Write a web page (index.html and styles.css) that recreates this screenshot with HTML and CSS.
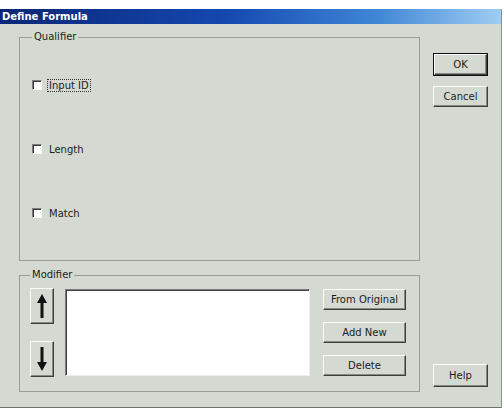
FILE: index.html
```html
<!DOCTYPE html>
<html lang="en">
<head>
    <meta charset="UTF-8">
    <title>Define Formula</title>
    <link rel="stylesheet" href="styles.css">
</head>
<body>

    <div class="window">
        <div class="titlebar">Define Formula</div>

        <div class="client">
            <div class="main">
                <fieldset class="group qualifier">
                    <legend>Qualifier</legend>
                    <label class="check">
                        <span class="box"></span><span class="caption focused">Input ID</span>
                    </label>
                    <label class="check">
                        <span class="box"></span><span class="caption">Length</span>
                    </label>
                    <label class="check">
                        <span class="box"></span><span class="caption">Match</span>
                    </label>
                </fieldset>

                <fieldset class="group modifier">
                    <legend>Modifier</legend>
                    <div class="arrows">
                        <button class="btn arrow">
                            <svg width="10" height="24" viewBox="0 0 10 24">
                                <path d="M5 0 L10 9 H6.5 V24 H3.5 V9 H0 Z" fill="#111"/>
                            </svg>
                        </button>
                        <button class="btn arrow">
                            <svg width="10" height="24" viewBox="0 0 10 24">
                                <path d="M5 24 L10 15 H6.5 V0 H3.5 V15 H0 Z" fill="#111"/>
                            </svg>
                        </button>
                    </div>
                    <div class="listbox"></div>
                    <div class="actions">
                        <button class="btn">From Original</button>
                        <button class="btn">Add New</button>
                        <button class="btn">Delete</button>
                    </div>
                </fieldset>
            </div>

            <div class="side">
                <button class="btn default">OK</button>
                <button class="btn">Cancel</button>
                <button class="btn help">Help</button>
            </div>
        </div>
    </div>

</body>
</html>
```

FILE: styles.css
```css
body {
    margin: 0;
    background: #fff;
    font-family: "DejaVu Sans", Tahoma, sans-serif;
    font-size: 10px;
    color: #1c1c1c;
}
.window {
    margin-top: 9px;
    width: 501px;
    height: 398px;
    background: #d4dad1;
    border-right: 1px solid #8a8f88;
    border-bottom: 1px solid #6e736c;
    display: flex;
    flex-direction: column;
}
.titlebar {
    height: 15px;
    line-height: 15px;
    padding-left: 2px;
    color: #fff;
    font-weight: bold;
    font-size: 10px;
    background: linear-gradient(to right, #0b2677, #1448b0 45%, #3f86d6 75%, #9fcdf2);
}
.client {
    flex: 1;
    display: flex;
    padding: 7px 0 14px 19px;
}
.main {
    display: flex;
    flex-direction: column;
    width: 401px;
}
.group {
    margin: 0;
    padding: 0;
    border: 1px solid #979c95;
    box-sizing: border-box;
    min-inline-size: 0;
}
.group legend {
    padding: 0 2px;
    line-height: 12px;
}
.qualifier {
    height: 230px;
    padding: 35px 0 0 12px;
    display: flex;
    flex-direction: column;
    gap: 50px;
}
.check {
    display: flex;
    align-items: center;
    height: 14px;
}
.box {
    width: 10px;
    height: 10px;
    box-sizing: border-box;
    background: #fff;
    border: 1px solid;
    border-color: #7c7c7c #fff #fff #7c7c7c;
    box-shadow: inset 1px 1px 0 #3a3a3a;
    margin-right: 5px;
}
.caption {
    padding: 0 1px;
    border: 1px solid transparent;
    line-height: 11px;
}
.caption.focused {
    border: 1px dotted #333;
}
.modifier {
    margin-top: 8px;
    height: 123px;
    padding: 7px 0 0 10px;
    display: flex;
    align-items: flex-start;
}
.btn {
    display: flex;
    align-items: center;
    justify-content: center;
    padding: 0;
    font: inherit;
    color: inherit;
    background: #d4dad1;
    border: 1px solid;
    border-color: #fbfcfa #3c3f3b #3c3f3b #fbfcfa;
    box-shadow: inset -1px -1px 0 #858a83;
    box-sizing: border-box;
}
.arrows {
    display: flex;
    flex-direction: column;
    gap: 17px;
}
.arrow {
    width: 24px;
    height: 36px;
}
.listbox {
    margin-left: 11px;
    margin-top: 1px;
    width: 245px;
    height: 87px;
    box-sizing: border-box;
    background: #fff;
    border: 1px solid;
    border-color: #7c7c7c #eef0ec #eef0ec #7c7c7c;
    box-shadow: inset 1px 1px 0 #404040;
}
.actions {
    margin-left: 13px;
    margin-top: 1px;
    display: flex;
    flex-direction: column;
    gap: 12px;
}
.actions .btn {
    width: 83px;
    height: 21px;
}
.side {
    margin-left: 13px;
    padding-top: 23px;
    display: flex;
    flex-direction: column;
    gap: 11px;
}
.side .btn {
    width: 55px;
    height: 21px;
}
.side .default {
    width: 53px;
    margin-left: 1px;
    outline: 1px solid #111;
}
.side .help {
    margin-top: auto;
    height: 23px;
    margin-bottom: 6px;
}
```
